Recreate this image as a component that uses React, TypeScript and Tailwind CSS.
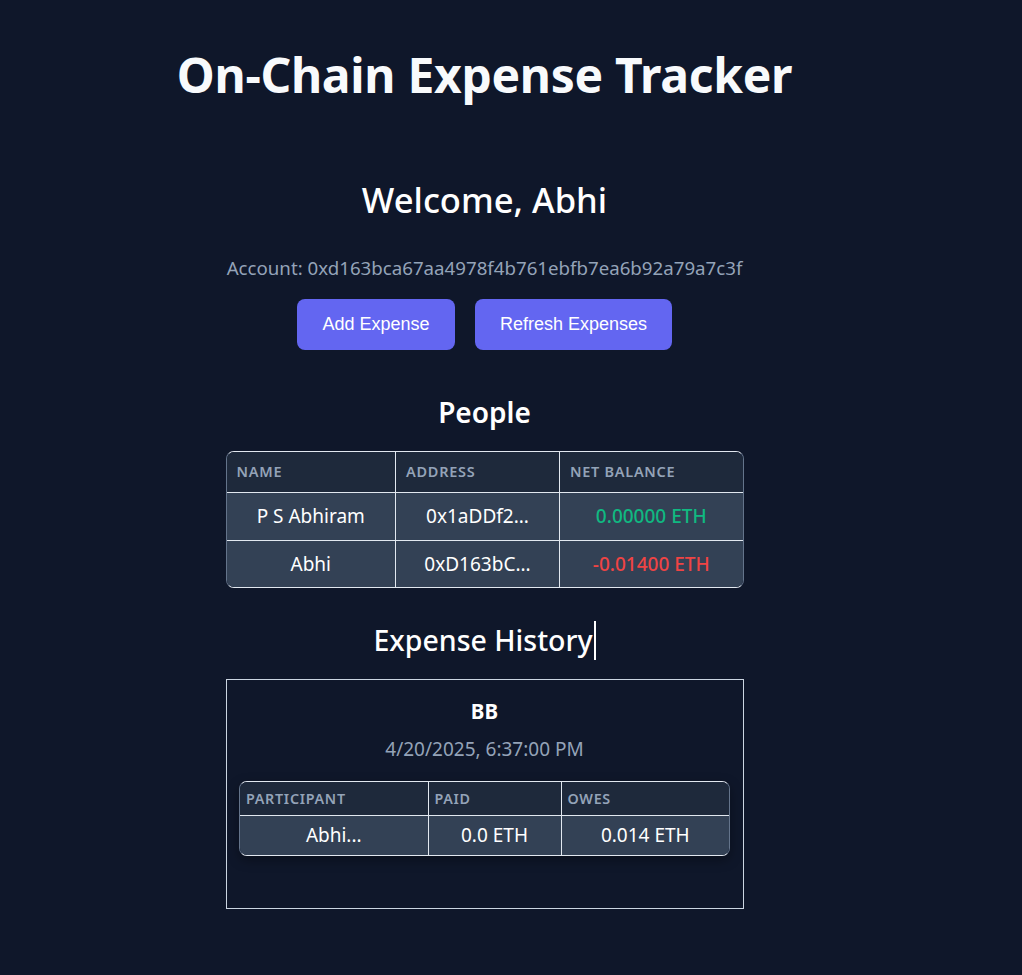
import React from "react";

const font = { fontFamily: '"Noto Sans", "Open Sans", sans-serif' };

function HeadCell({ children, last }: { children: React.ReactNode; last?: boolean }) {
  return (
    <th
      className={`text-left font-semibold uppercase tracking-[0.05em] text-[#94a3b8] bg-[#1e293b] border-b border-[#e2e8f0] ${last ? "" : "border-r"}`}
    >
      {children}
    </th>
  );
}

export default function App() {
  return (
    <div className="min-h-[975px] w-full bg-[#0f172a] text-white" style={font}>
      <div className="w-[969px] flex flex-col items-center">
        <h1 className="mt-[47px] h-[56px] flex items-center justify-center text-[48px] font-bold tracking-[-0.3px] text-[#f8fafc] leading-none">
          On-Chain Expense Tracker
        </h1>

        <h2 className="mt-[74px] h-[46px] flex items-center justify-center text-[34.6px] font-medium leading-none">
          Welcome, Abhi
        </h2>

        <p className="mt-[31px] h-[28px] flex items-center justify-center text-[18.7px] text-[#94a3b8] leading-none">
          Account: 0xd163bca67aa4978f4b761ebfb7ea6b92a79a7c3f
        </p>

        <div className="mt-[17px] flex gap-[20px]" style={{ fontFamily: '"Liberation Sans", Arial, sans-serif' }}>
          <button className="w-[158px] h-[51px] rounded-[8px] bg-[#6366f1] text-white text-[18px]">
            Add Expense
          </button>
          <button className="w-[197px] h-[51px] rounded-[8px] bg-[#6366f1] text-white text-[18px]">
            Refresh Expenses
          </button>
        </div>

        <h3 className="mt-[44px] h-[36px] flex items-center justify-center text-[28px] font-semibold leading-none">
          People
        </h3>

        <div className="mt-[21px] w-[518px] rounded-[8px] overflow-hidden border-y border-[#e2e8f0] border-x border-x-[#64748b]">
          <table className="w-full border-collapse">
            <colgroup>
              <col className="w-[169px]" />
              <col className="w-[164px]" />
              <col />
            </colgroup>
            <thead>
              <tr className="h-[40px] text-[14.5px]">
                <HeadCell><span className="pl-[10px]">Name</span></HeadCell>
                <HeadCell><span className="pl-[10px]">Address</span></HeadCell>
                <HeadCell last><span className="pl-[10px]">Net Balance</span></HeadCell>
              </tr>
            </thead>
            <tbody className="bg-[#334155] text-[19px]">
              <tr className="h-[48px]">
                <td className="text-center border-r border-b border-[#e2e8f0]">P S Abhiram</td>
                <td className="text-center border-r border-b border-[#e2e8f0]">0x1aDDf2...</td>
                <td className="text-center border-b border-[#e2e8f0] text-[#10b981] font-medium">0.00000 ETH</td>
              </tr>
              <tr className="h-[47px]">
                <td className="text-center border-r border-[#e2e8f0]">Abhi</td>
                <td className="text-center border-r border-[#e2e8f0]">0xD163bC...</td>
                <td className="text-center text-[#ef4444] font-medium">-0.01400 ETH</td>
              </tr>
            </tbody>
          </table>
        </div>

        <h3 className="mt-[34px] h-[36px] flex items-center justify-center text-[28.5px] font-medium leading-none">
          Expense History
          <span className="ml-[1px] inline-block w-[2px] h-[39px] bg-white" />
        </h3>

        <div className="mt-[21px] w-[518px] h-[230px] border border-[#cbd5e1] flex flex-col items-center">
          <div className="mt-[18px] h-[26px] flex items-center text-[20.5px] font-bold leading-none">BB</div>
          <div className="mt-[12px] h-[26px] flex items-center text-[19px] text-[#94a3b8] leading-none">
            4/20/2025, 6:37:00 PM
          </div>
          <div className="mt-[19px] w-[491px] rounded-[8px] overflow-hidden border-y border-[#e2e8f0] border-x border-x-[#64748b] shadow-[0_4px_12px_rgba(0,0,0,0.35)]">
            <table className="w-full border-collapse">
              <colgroup>
                <col className="w-[188px]" />
                <col className="w-[133px]" />
                <col />
              </colgroup>
              <thead>
                <tr className="h-[33px] text-[14.3px]">
                  <HeadCell><span className="pl-[6px]">Participant</span></HeadCell>
                  <HeadCell><span className="pl-[6px]">Paid</span></HeadCell>
                  <HeadCell last><span className="pl-[6px]">Owes</span></HeadCell>
                </tr>
              </thead>
              <tbody className="bg-[#334155] text-[19px]">
                <tr className="h-[40px]">
                  <td className="text-center border-r border-[#e2e8f0]">Abhi...</td>
                  <td className="text-center border-r border-[#e2e8f0]">0.0 ETH</td>
                  <td className="text-center">0.014 ETH</td>
                </tr>
              </tbody>
            </table>
          </div>
        </div>
      </div>
    </div>
  );
}
